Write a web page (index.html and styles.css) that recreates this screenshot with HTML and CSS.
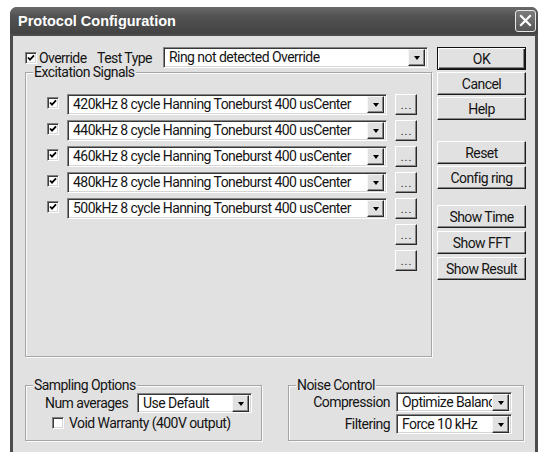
FILE: index.html
```html
<!DOCTYPE html>
<html lang="en">
<head>
<meta charset="utf-8">
<title>Protocol Configuration</title>
<link rel="stylesheet" href="styles.css">
</head>
<body>
<div class="window">
  <div class="titlebar">
    <span class="title">Protocol Configuration</span>
    <span class="close">
      <svg width="13" height="13" viewBox="0 0 13 13"><path d="M2 2 L11 11 M11 2 L2 11" stroke="#fff" stroke-width="2.2" stroke-linecap="square"/></svg>
    </span>
  </div>
  <div class="client">
    <div class="main">
      <div class="left">
        <div class="toprow">
          <label class="override"><span class="cb"><svg class="tick" width="8" height="8" viewBox="0 0 8 8"><path d="M1 3.5 L3 5.6 L7 1.3" fill="none" stroke="#000" stroke-width="1.8"/></svg></span><span class="cb-text">Override</span></label>
          <span class="testtype">Test Type</span>
          <div class="combo type-combo"><span class="val">Ring not detected Override</span><span class="arrow"></span></div>
        </div>
        <div class="group excite">
          <div class="group-title">Excitation Signals</div>
          <div class="signals">
            <span class="cb"><svg class="tick" width="8" height="8" viewBox="0 0 8 8"><path d="M1 3.5 L3 5.6 L7 1.3" fill="none" stroke="#000" stroke-width="1.8"/></svg></span>
            <div class="combo"><span class="val">420kHz 8 cycle Hanning Toneburst 400 usCenter</span><span class="arrow"></span></div>
            <span class="dots">...</span>

            <span class="cb"><svg class="tick" width="8" height="8" viewBox="0 0 8 8"><path d="M1 3.5 L3 5.6 L7 1.3" fill="none" stroke="#000" stroke-width="1.8"/></svg></span>
            <div class="combo"><span class="val">440kHz 8 cycle Hanning Toneburst 400 usCenter</span><span class="arrow"></span></div>
            <span class="dots">...</span>

            <span class="cb"><svg class="tick" width="8" height="8" viewBox="0 0 8 8"><path d="M1 3.5 L3 5.6 L7 1.3" fill="none" stroke="#000" stroke-width="1.8"/></svg></span>
            <div class="combo"><span class="val">460kHz 8 cycle Hanning Toneburst 400 usCenter</span><span class="arrow"></span></div>
            <span class="dots">...</span>

            <span class="cb"><svg class="tick" width="8" height="8" viewBox="0 0 8 8"><path d="M1 3.5 L3 5.6 L7 1.3" fill="none" stroke="#000" stroke-width="1.8"/></svg></span>
            <div class="combo"><span class="val">480kHz 8 cycle Hanning Toneburst 400 usCenter</span><span class="arrow"></span></div>
            <span class="dots">...</span>

            <span class="cb"><svg class="tick" width="8" height="8" viewBox="0 0 8 8"><path d="M1 3.5 L3 5.6 L7 1.3" fill="none" stroke="#000" stroke-width="1.8"/></svg></span>
            <div class="combo"><span class="val">500kHz 8 cycle Hanning Toneburst 400 usCenter</span><span class="arrow"></span></div>
            <span class="dots">...</span>

            <span class="dots extra">...</span>
            <span class="dots extra">...</span>
          </div>
        </div>
      </div>
      <div class="buttons">
        <span class="btn default">OK</span>
        <span class="btn">Cancel</span>
        <span class="btn">Help</span>
        <span class="btn sep-a">Reset</span>
        <span class="btn">Config ring</span>
        <span class="btn sep-b">Show Time</span>
        <span class="btn tight">Show FFT</span>
        <span class="btn tight">Show Result</span>
      </div>
    </div>
    <div class="bottom">
      <div class="group sampling">
        <div class="group-title">Sampling Options</div>
        <div class="samp-row">
          <span class="samp-label">Num averages</span>
          <div class="combo samp-combo"><span class="val">Use Default</span><span class="arrow"></span></div>
        </div>
        <label class="void-row"><span class="cb"></span><span class="cb-text">Void Warranty (400V output)</span></label>
      </div>
      <div class="group noise">
        <div class="group-title">Noise Control</div>
        <div class="noise-grid">
          <span class="noise-label">Compression</span>
          <div class="combo"><span class="val">Optimize Balanced</span><span class="arrow"></span></div>
          <span class="noise-label">Filtering</span>
          <div class="combo"><span class="val">Force 10 kHz</span><span class="arrow"></span></div>
        </div>
      </div>
    </div>
  </div>
</div>
</body>
</html>
```

FILE: styles.css
```css
* { box-sizing: border-box; }

html, body {
  margin: 0;
  padding: 0;
  background: #fff;
}

body {
  font-family: Roboto, "Liberation Sans", sans-serif;
  font-size: 14px;
  letter-spacing: -0.55px;
  color: #141414;
}

/* dialog frame */
.window {
  margin: 7px 0 0 10px;
  width: 528px;
  height: 445px;
  background: #4c4c4c;
  border-radius: 7px 7px 0 0;
  display: flex;
  flex-direction: column;
  overflow: hidden;
}

.titlebar {
  flex: none;
  height: 27px;
  display: flex;
  align-items: center;
  justify-content: space-between;
  padding: 0 2px 0 8px;
  background: linear-gradient(#6a6a6a 0, #525252 35%, #434343 100%);
}

.title {
  font-family: "Liberation Sans", sans-serif;
  font-weight: bold;
  font-size: 14.5px;
  letter-spacing: 0;
  color: #fff;
}

.close {
  width: 21px;
  height: 22px;
  border: 1px solid #e6e6e6;
  border-radius: 3px;
  background: linear-gradient(#7c7c7c, #575757);
  display: flex;
  align-items: center;
  justify-content: center;
}

.client {
  flex: 1;
  margin: 2px 3px 0;
  background: #e1e1e1;
  padding: 11px 0 0 12px;
}

.main {
  display: flex;
  gap: 5px;
}

.left {
  width: 407px;
  flex: none;
}

/* top line: override + test type */
.toprow {
  height: 21px;
  display: flex;
  align-items: center;
}

.override {
  width: 72px;
  display: flex;
  align-items: center;
}

.cb-text { margin-left: 2px; }

.testtype { width: 66px; }

.type-combo { width: 265px; }

/* 3D sunken check box */
.cb {
  width: 12px;
  height: 12px;
  flex: none;
  background: #fff;
  border: 1px solid;
  border-color: #808080 #fff #fff #808080;
  box-shadow: inset 1px 1px 0 #3c3c3c, inset -1px -1px 0 #d6d6d6;
  display: flex;
  align-items: center;
  justify-content: center;
}

.tick { display: block; }

/* drop-down combo */
.combo {
  display: flex;
  align-items: center;
  height: 21px;
  background: #fff;
  border: 1px solid;
  border-color: #858585 #fff #fff #858585;
  box-shadow: inset 1px 1px 0 #383838, inset -1px -1px 0 #d6d6d6;
  padding: 2px 2px 2px 5px;
}

.combo .val {
  flex: 1;
  min-width: 0;
  white-space: nowrap;
  overflow: hidden;
  line-height: 17px;
}

.arrow {
  flex: none;
  width: 17px;
  height: 17px;
  background: #e1e1e1;
  border: 1px solid;
  border-color: #f6f6f6 #2a2a2a #2a2a2a #f6f6f6;
  box-shadow: inset -1px -1px 0 #888;
  display: flex;
  align-items: center;
  justify-content: center;
}

.arrow::after {
  content: "";
  border-left: 3.5px solid transparent;
  border-right: 3.5px solid transparent;
  border-top: 4px solid #000;
  margin-top: 1px;
}

/* etched group boxes */
.group {
  border: 1px solid #a5a5a5;
  box-shadow: 1px 1px 0 #fafafa, inset 1px 1px 0 #fafafa;
}

.group-title {
  display: table;
  margin: -9px 0 0 7px;
  padding: 0 1px;
  background: #e1e1e1;
  line-height: 16px;
}

.excite {
  margin-top: 4px;
  height: 285px;
}

.signals {
  margin: 14px 0 0 21px;
  display: grid;
  grid-template-columns: 12px 320px 22px;
  column-gap: 8px;
  row-gap: 5px;
  align-items: center;
}

.signals .cb { margin-top: -4px; }

.dots {
  grid-column: 3;
  height: 21px;
  background: #e1e1e1;
  border: 1px solid;
  border-color: #fff #2a2a2a #2a2a2a #fff;
  box-shadow: inset -1px -1px 0 #888;
  display: flex;
  align-items: flex-end;
  justify-content: center;
  font-size: 11px;
  line-height: 14px;
  letter-spacing: 1px;
  padding-left: 1px;
  padding-bottom: 1px;
}

/* command buttons */
.buttons {
  width: 89px;
  flex: none;
  display: flex;
  flex-direction: column;
  gap: 2px;
}

.btn {
  height: 23px;
  background: #e1e1e1;
  border: 1px solid;
  border-color: #fff #1c1c1c #1c1c1c #fff;
  box-shadow: inset -1px -1px 0 #868686;
  display: flex;
  align-items: center;
  justify-content: center;
  white-space: nowrap;
}

.btn.default {
  border-color: #111;
  box-shadow: inset 1px 1px 0 #fff, inset -1px -1px 0 #1c1c1c, inset -2px -2px 0 #868686;
}

.sep-a { margin-top: 19px; }
.sep-b { margin-top: 14px; }
.tight { margin-top: 1px; }

/* lower option groups */
.bottom {
  display: flex;
  gap: 26px;
  margin-top: 28px;
}

.sampling,
.noise {
  height: 56px;
}

.sampling { width: 237px; }
.noise { width: 236px; }

.samp-row {
  display: flex;
  align-items: center;
  padding-left: 19px;
}

.samp-label { width: 92px; }

.samp-combo { width: 115px; height: 20px; }

.void-row {
  display: flex;
  align-items: center;
  padding-left: 26px;
  margin-top: 2px;
}

.void-row .cb-text { margin-left: 5px; }

.noise-grid {
  display: grid;
  grid-template-columns: 1fr 116px;
  column-gap: 6px;
  row-gap: 2px;
  align-items: center;
  padding-right: 11px;
  margin-top: -1px;
}

.noise-label { text-align: right; }

.noise-grid .combo { height: 20px; }
```
